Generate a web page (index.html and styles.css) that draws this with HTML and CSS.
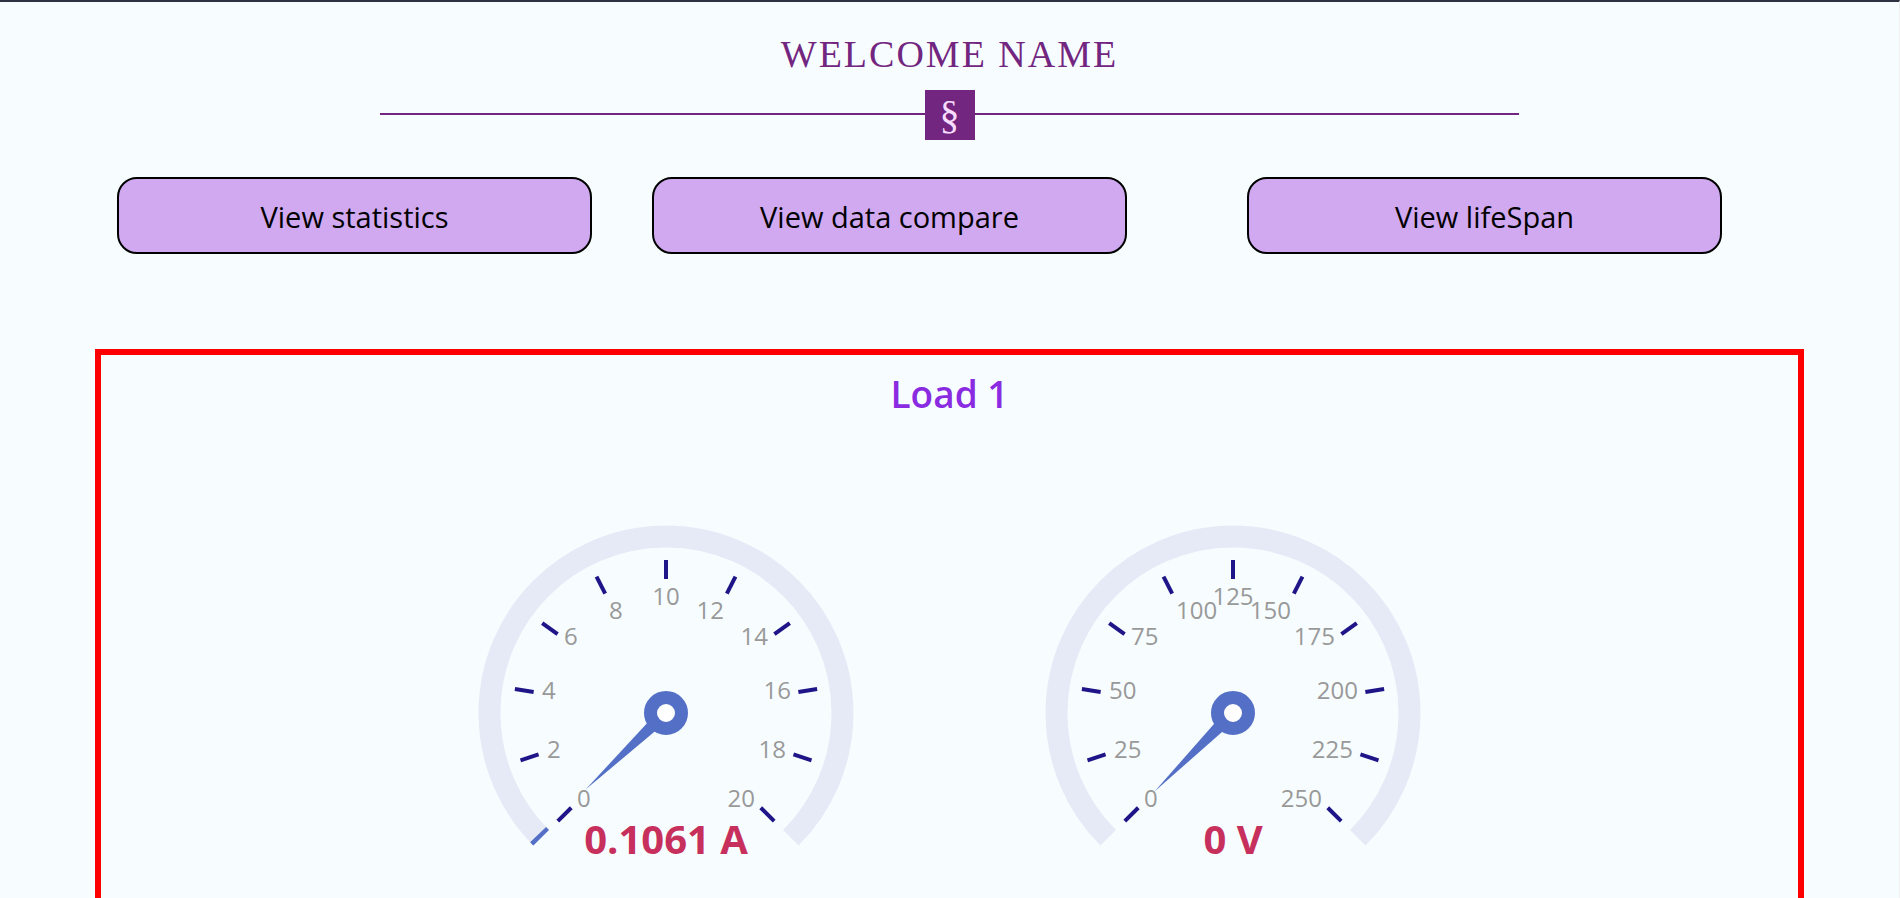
FILE: index.html
```html
<!DOCTYPE html>
<html lang="en">
<head>
<meta charset="utf-8">
<title>Dashboard</title>
<link rel="stylesheet" href="styles.css">
</head>
<body>
<div class="page">
  <header class="welcome">
    <h1 class="welcome-title">Welcome Name</h1>
    <div class="divider"><span class="divider-mark">§</span></div>
  </header>

  <nav class="actions">
    <button class="action" type="button">View statistics</button>
    <button class="action" type="button">View data compare</button>
    <button class="action action-last" type="button">View lifeSpan</button>
  </nav>

  <main class="panel">
    <h2 class="panel-title">Load 1</h2>
    <div class="gauges">
      <svg class="gauge" viewBox="-210 -210 420 420" role="img" aria-label="Current 0.1061 A">
        <path class="track" d="M-124.8 124.8A176.5 176.5 0 1 1 124.8 124.8"/>
        <path class="progress" d="M-124.8 124.8A176.5 176.5 0 0 1 -127.9 121.6"/>
        <g class="ticks">
          <path d="M0-134V-153" transform="rotate(-135)"/>
          <path d="M0-134V-153" transform="rotate(-108)"/>
          <path d="M0-134V-153" transform="rotate(-81)"/>
          <path d="M0-134V-153" transform="rotate(-54)"/>
          <path d="M0-134V-153" transform="rotate(-27)"/>
          <path d="M0-134V-153"/>
          <path d="M0-134V-153" transform="rotate(27)"/>
          <path d="M0-134V-153" transform="rotate(54)"/>
          <path d="M0-134V-153" transform="rotate(81)"/>
          <path d="M0-134V-153" transform="rotate(108)"/>
          <path d="M0-134V-153" transform="rotate(135)"/>
        </g>
        <path class="pointer" d="M-7 0L0-111L7 0Z" transform="rotate(-133.57)"/>
        <g class="labels">
          <text x="-89" y="94">0</text>
          <text x="-119" y="45">2</text>
          <text x="-124" y="-14">4</text>
          <text x="-102" y="-68">6</text>
          <text x="-57" y="-94">8</text>
          <text class="mid" x="0" y="-108">10</text>
          <text class="end" x="58" y="-94">12</text>
          <text class="end" x="102" y="-68">14</text>
          <text class="end" x="125" y="-14">16</text>
          <text class="end" x="120" y="45">18</text>
          <text class="end" x="89" y="94">20</text>
        </g>
        <circle class="anchor" r="15.5"/>
        <text class="value" x="0" y="141">0.1061 A</text>
      </svg>
      <svg class="gauge" viewBox="-210 -210 420 420" role="img" aria-label="Voltage 0 V">
        <path class="track" d="M-124.8 124.8A176.5 176.5 0 1 1 124.8 124.8"/>
        <g class="ticks">
          <path d="M0-134V-153" transform="rotate(-135)"/>
          <path d="M0-134V-153" transform="rotate(-108)"/>
          <path d="M0-134V-153" transform="rotate(-81)"/>
          <path d="M0-134V-153" transform="rotate(-54)"/>
          <path d="M0-134V-153" transform="rotate(-27)"/>
          <path d="M0-134V-153"/>
          <path d="M0-134V-153" transform="rotate(27)"/>
          <path d="M0-134V-153" transform="rotate(54)"/>
          <path d="M0-134V-153" transform="rotate(81)"/>
          <path d="M0-134V-153" transform="rotate(108)"/>
          <path d="M0-134V-153" transform="rotate(135)"/>
        </g>
        <path class="pointer" d="M-7 0L0-111L7 0Z" transform="rotate(-135)"/>
        <g class="labels">
          <text x="-89" y="94">0</text>
          <text x="-119" y="45">25</text>
          <text x="-124" y="-14">50</text>
          <text x="-102" y="-68">75</text>
          <text x="-57" y="-94">100</text>
          <text class="mid" x="0" y="-108">125</text>
          <text class="end" x="58" y="-94">150</text>
          <text class="end" x="102" y="-68">175</text>
          <text class="end" x="125" y="-14">200</text>
          <text class="end" x="120" y="45">225</text>
          <text class="end" x="89" y="94">250</text>
        </g>
        <circle class="anchor" r="15.5"/>
        <text class="value" x="0" y="141">0 V</text>
      </svg>
    </div>
  </main>
</div>
</body>
</html>
```
FILE: styles.css
```css
* {
  box-sizing: border-box;
}

body {
  margin: 0;
  font-family: "Segoe UI", "Open Sans", "Noto Sans", sans-serif;
  background: #f7fdff;
}

.page {
  height: 100vh;
  overflow: hidden;
  border-top: 2px solid #2f3142;
  border-right: 1px solid #f0f0f0;
}

.welcome {
  display: flex;
  flex-direction: column;
  align-items: center;
  gap: 12px;
  padding-top: 28px;
}

.welcome-title {
  margin: 0;
  font: 400 38px/48px "Times New Roman", "Liberation Serif", serif;
  letter-spacing: 2px;
  text-transform: uppercase;
  color: #72267f;
}

.divider {
  display: flex;
  align-items: center;
  width: 60%;
}

.divider::before,
.divider::after {
  content: "";
  flex: 1;
  height: 2px;
  margin-bottom: 2px;
  background: #72267f;
}

.divider-mark {
  width: 50px;
  height: 50px;
  font: 40px/50px "Times New Roman", "Liberation Serif", serif;
  text-align: center;
  color: #f8ddff;
  background: #72267f;
}

.actions {
  display: flex;
  gap: 60px;
  padding: 37px 0 0 117px;
}

.action {
  width: 25vw;
  height: 77px;
  padding: 2px 0 0;
  border: 2px solid #000;
  border-radius: 20px;
  font: 400 29px/40px "Segoe UI", "Open Sans", "Noto Sans", sans-serif;
  color: #000;
  background: #d0a9f1;
}

.action-last {
  margin-left: 60px;
}

.panel {
  width: 90%;
  margin: 95px auto 0;
  padding: 15px 0 40px;
  border: 6px solid #f00;
}

.panel-title {
  margin: 0;
  font-size: 37px;
  line-height: 48px;
  font-weight: 600;
  text-align: center;
  color: #8a2be2;
}

.gauges {
  display: flex;
  justify-content: space-around;
  max-width: 1134px;
  margin: 85px auto 0;
}

.gauge {
  width: 420px;
  height: 420px;
}

.track,
.progress {
  fill: none;
  stroke: #e6eaf7;
  stroke-width: 22;
}

.progress {
  stroke: #5470c6;
}

.ticks {
  stroke: #201588;
  stroke-width: 4;
}

.pointer {
  fill: #5470c6;
}

.anchor {
  fill: #fff;
  stroke: #5470c6;
  stroke-width: 13;
}

.labels {
  font-size: 24px;
  fill: #999;
}

.labels .mid {
  text-anchor: middle;
}

.labels .end {
  text-anchor: end;
}

.value {
  font-size: 40px;
  font-weight: 700;
  text-anchor: middle;
  fill: #c7305c;
}
```
